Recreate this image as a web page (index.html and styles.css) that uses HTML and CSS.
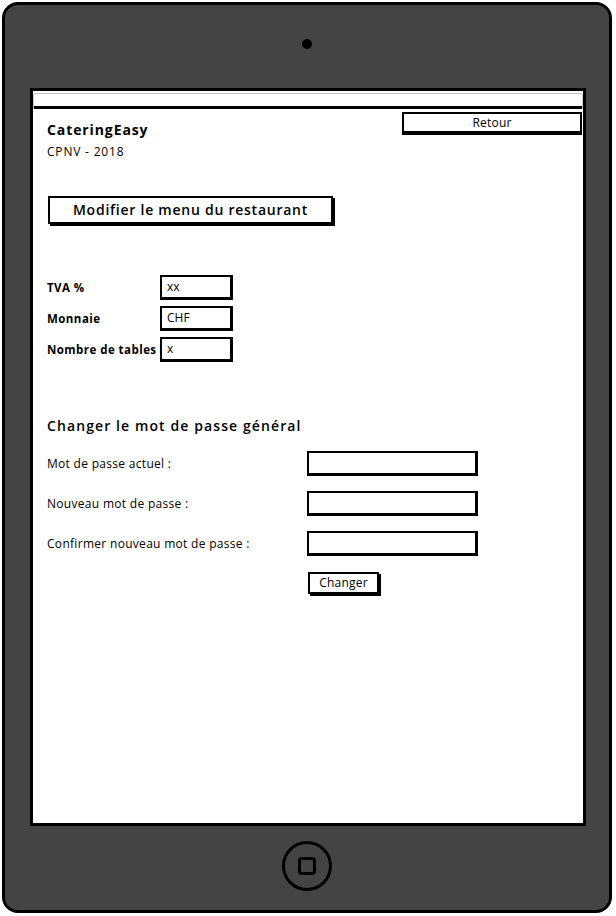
FILE: index.html
```html
<!DOCTYPE html>
<html lang="fr">
<head>
<meta charset="utf-8">
<title>CateringEasy - Paramètres</title>
<link rel="stylesheet" href="styles.css">
</head>
<body>
<div class="device">
  <div class="camera"></div>
  <div class="screen">
    <div class="topbar"></div>
    <div class="header">
      <div class="brand">
        <div class="brand-name">CateringEasy</div>
        <div class="brand-sub">CPNV - 2018</div>
      </div>
      <div class="btn btn-back">Retour</div>
    </div>
    <div class="btn btn-menu">Modifier le menu du restaurant</div>
    <div class="settings">
      <div class="set-row">
        <div class="set-label">TVA %</div>
        <div class="box small">xx</div>
      </div>
      <div class="set-row">
        <div class="set-label">Monnaie</div>
        <div class="box small">CHF</div>
      </div>
      <div class="set-row">
        <div class="set-label">Nombre de tables</div>
        <div class="box small">x</div>
      </div>
    </div>
    <div class="section-title">Changer le mot de passe général</div>
    <div class="pw">
      <div class="pw-row">
        <div class="pw-label">Mot de passe actuel :</div>
        <div class="box wide"></div>
      </div>
      <div class="pw-row">
        <div class="pw-label">Nouveau mot de passe :</div>
        <div class="box wide"></div>
      </div>
      <div class="pw-row">
        <div class="pw-label">Confirmer nouveau mot de passe :</div>
        <div class="box wide"></div>
      </div>
    </div>
    <div class="btn btn-change">Changer</div>
  </div>
  <div class="home"><div class="home-square"></div></div>
</div>
</body>
</html>
```
FILE: styles.css
```css
* { box-sizing: border-box; }
html, body { margin: 0; padding: 0; background: #fff; }
body { font-family: "Open Sans", Lato, sans-serif; color: #000; }

.device {
  margin: 2px 0 0 2px;
  width: 610px;
  height: 911px;
  border: 3px solid #000;
  border-radius: 16px;
  background: #444444;
  display: flex;
  flex-direction: column;
  align-items: flex-start;
}
.camera {
  align-self: center;
  width: 10px;
  height: 10px;
  border-radius: 50%;
  background: #000;
  margin-top: 34px;
}
.screen {
  margin-top: 39px;
  margin-left: 25px;
  width: 556px;
  height: 738px;
  border: 3px solid #000;
  background: #fff;
  display: flex;
  flex-direction: column;
  align-items: flex-start;
  padding-left: 14px;
}
.topbar {
  align-self: stretch;
  margin-left: -14px;
  margin-top: 2px;
  height: 16px;
  border-top: 1px solid #c4c4c4;
  border-bottom: 3px solid #000;
  border-left: 1px solid #ccc;
  border-right: 1px solid #ccc;
  border-radius: 2px;
}
.header {
  align-self: stretch;
  display: flex;
  justify-content: space-between;
  align-items: flex-start;
}
.brand-name {
  margin-top: 11px;
  font-size: 14px;
  line-height: 20px;
  font-weight: 700;
  letter-spacing: 0.9px;
}
.brand-sub {
  margin-top: 4px;
  font-size: 12px;
  line-height: 16px;
  letter-spacing: 0.8px;
}
.btn {
  border: 2px solid #000;
  background: #fff;
  box-shadow: 2px 2px 0 #000;
  text-align: center;
}
.btn-back {
  margin-top: 3px;
  margin-right: 1px;
  width: 180px;
  height: 21px;
  font-size: 12px;
  line-height: 17px;
  letter-spacing: 0.2px;
  box-shadow: 0 2px 0 #000;
}
.btn-menu {
  margin-top: 36px;
  margin-left: 1px;
  width: 285px;
  height: 28px;
  font-size: 14px;
  line-height: 24px;
  font-weight: 600;
  letter-spacing: 0.75px;
  box-shadow: 2px 2px 0 #000;
}
.settings {
  margin-top: 51px;
  display: flex;
  flex-direction: column;
  gap: 6px;
}
.set-row {
  display: flex;
  align-items: center;
  height: 25px;
}
.set-label {
  width: 113px;
  font-size: 11.5px;
  font-weight: 700;
  letter-spacing: 0.45px;
}
.box {
  border: 2px solid #000;
  border-right-width: 3px;
  border-bottom-width: 3px;
  background: #fff;
  height: 25px;
}
.small {
  width: 73px;
  padding-left: 5px;
  font-size: 12px;
  line-height: 20px;
}
.section-title {
  margin-top: 54px;
  font-size: 14px;
  line-height: 20px;
  font-weight: 600;
  letter-spacing: 1.1px;
}
.pw {
  margin-top: 15px;
  display: flex;
  flex-direction: column;
  gap: 15px;
}
.pw-row {
  display: flex;
  align-items: center;
  height: 25px;
}
.pw-label {
  width: 260px;
  font-size: 12px;
  letter-spacing: 0.3px;
}
.wide { width: 171px; }
.btn-change {
  margin-top: 16px;
  margin-left: 261px;
  width: 71px;
  height: 22px;
  font-size: 12px;
  line-height: 18px;
  letter-spacing: 0.2px;
}
.home {
  align-self: center;
  margin-top: 15px;
  width: 50px;
  height: 50px;
  border: 3px solid #000;
  border-radius: 50%;
  display: flex;
  align-items: center;
  justify-content: center;
}
.home-square {
  width: 18px;
  height: 18px;
  border: 3px solid #000;
  border-radius: 4px;
}
```
